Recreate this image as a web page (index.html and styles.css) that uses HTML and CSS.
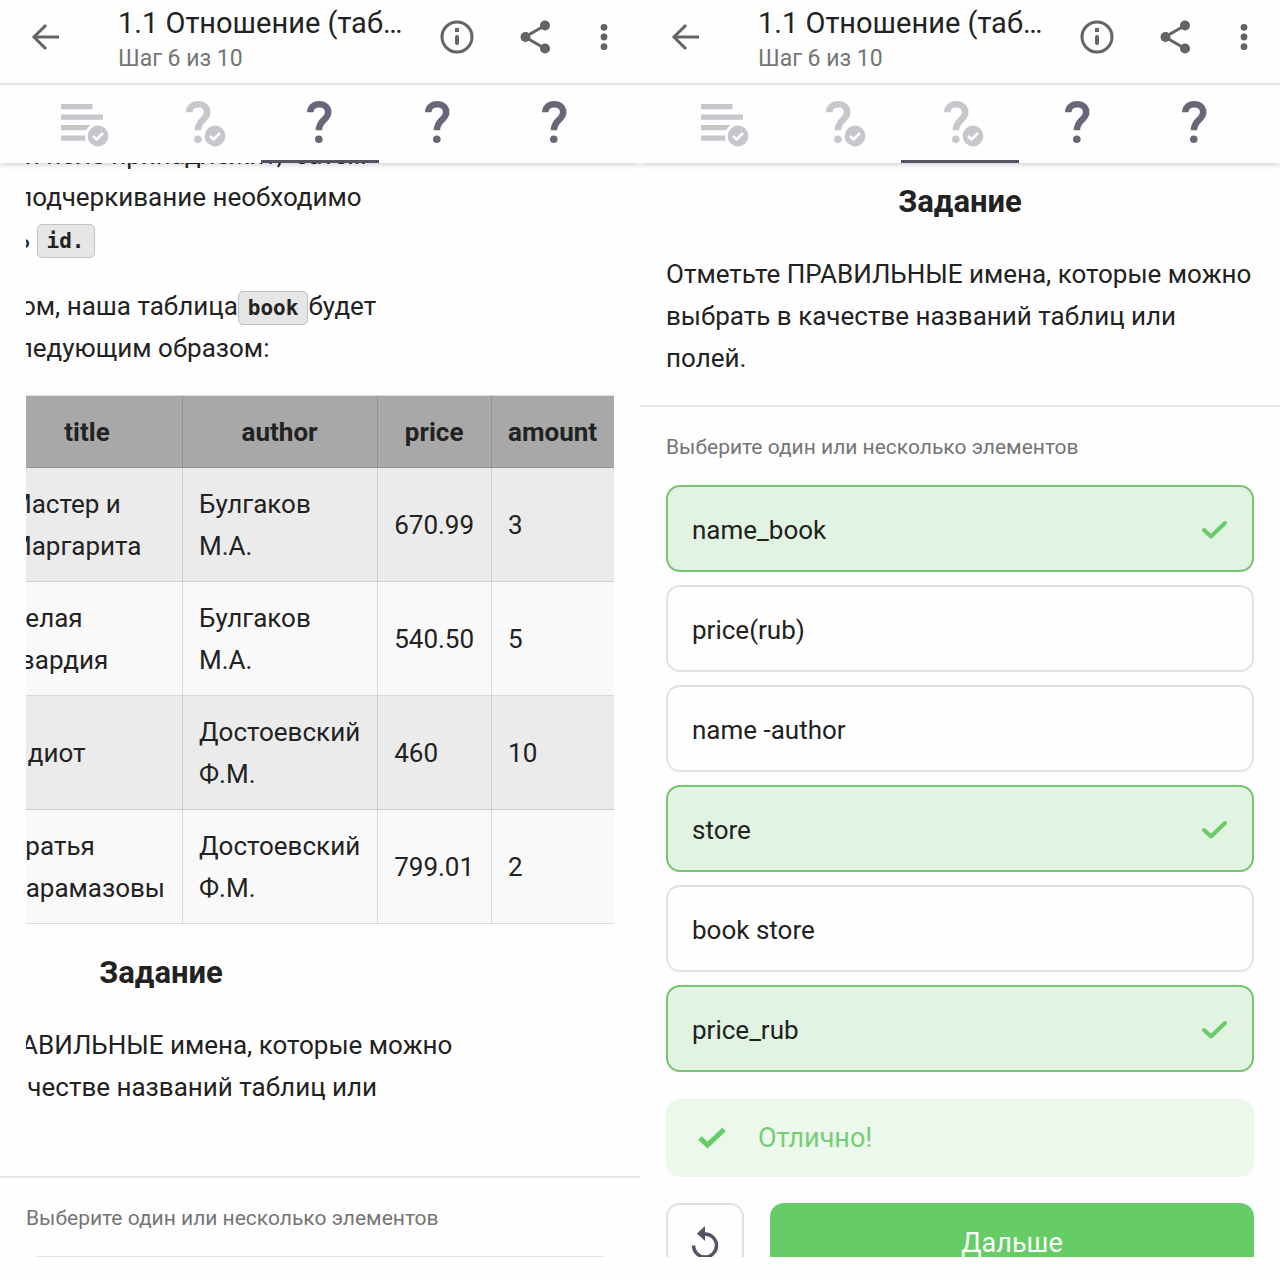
FILE: index.html
```
<!DOCTYPE html>
<html lang="ru">
<head>
<meta charset="utf-8">
<meta name="viewport" content="width=device-width, initial-scale=1">
<title>1.1 Отношение (таблица)</title>
<link rel="stylesheet" href="styles.css">
</head>
<body>
<svg class="sprite" aria-hidden="true">
  <symbol id="back" viewBox="0 0 40 40"><path d="M33 20H8M20 8 8 20l12 12" fill="none" stroke="currentColor" stroke-width="3"/></symbol>
  <symbol id="info" viewBox="0 0 40 40"><circle cx="20" cy="20" r="15" fill="none" stroke="currentColor" stroke-width="3"/><path d="M20 20v6" stroke="currentColor" stroke-width="4" stroke-linecap="round"/><rect x="18" y="11" width="4" height="4" fill="currentColor"/></symbol>
  <symbol id="share" viewBox="0 0 40 40"><path d="M30 8.500 10 20l20 11.500" fill="none" stroke="currentColor" stroke-width="3"/><g fill="currentColor"><circle cx="30" cy="8.500" r="5"/><circle cx="10.500" cy="20" r="5"/><circle cx="30" cy="31.500" r="5"/></g></symbol>
  <symbol id="more" viewBox="0 0 22 40"><g fill="currentColor"><circle cx="11" cy="10.300" r="3.400"/><circle cx="11" cy="20" r="3.400"/><circle cx="11" cy="29.700" r="3.400"/></g></symbol>
  <symbol id="badge" viewBox="0 0 48 48"><circle cx="37" cy="36" r="13" fill="#fff"/><circle cx="37" cy="36" r="10.400" fill="currentColor"/><path d="m32 36 3.500 3.500L42 33" fill="none" stroke="#fff" stroke-width="2.600"/></symbol>
  <symbol id="text" viewBox="0 0 48 48"><path d="M0 4h31.500v5.300H0zM0 14.500h42v5.300H0zM0 25h42v5.300H0zM0 35.500h42v5.300H0z" fill="currentColor"/><use href="#badge"/></symbol>
  <symbol id="mark" viewBox="0 0 25 43"><path d="M3.300 11.200C3.300 6.300 7 3.300 12.200 3.300 17.600 3.300 21.200 6.400 21.200 11.300 21.200 19 11.900 18.500 11.900 29.200" fill="none" stroke="currentColor" stroke-width="6.500"/><circle cx="11.800" cy="38.300" r="3.800" fill="currentColor"/></symbol>
  <symbol id="quiz" viewBox="0 0 48 48"><use href="#mark" x="11" y="1" width="25" height="43"/></symbol>
  <symbol id="quiz-done" viewBox="0 0 48 48"><use href="#mark" x="8" y="1" width="25" height="43"/><use href="#badge"/></symbol>
  <symbol id="tick" viewBox="0 0 28 28"><path d="m4 14 7 6.500L25 7" fill="none" stroke="currentColor" stroke-width="4" stroke-linecap="round" stroke-linejoin="round"/></symbol>
  <symbol id="tick-bold" viewBox="0 0 28 28"><path d="m2 14 7.500 7L26 5.500" fill="none" stroke="currentColor" stroke-width="5"/></symbol>
  <symbol id="retry" viewBox="0 0 32 36"><path d="M4.500 20.500A11.500 11.500 0 1 0 16 9" fill="none" stroke="currentColor" stroke-width="3.400"/><path d="M16 1v15l-8-7.500z" fill="currentColor"/></symbol>
</svg>
<main class="panes">
  <section class="pane">
    <header class="bar">
      <button class="icon" aria-label="Назад"><svg width="40" height="40"><use href="#back"/></svg></button>
      <div class="heading"><h1>1.1 Отношение (таб…</h1><p>Шаг 6 из 10</p></div>
      <button class="icon" aria-label="Информация"><svg width="40" height="40"><use href="#info"/></svg></button>
      <button class="icon" aria-label="Поделиться"><svg width="40" height="40"><use href="#share"/></svg></button>
      <button class="icon" aria-label="Меню"><svg width="22" height="40"><use href="#more"/></svg></button>
    </header>
    <nav class="tabs" aria-label="Шаги">
      <a class="done" href="#s4" aria-label="Шаг 4"><svg width="48" height="48"><use href="#text"/></svg></a>
      <a class="done" href="#s5" aria-label="Шаг 5"><svg width="48" height="48"><use href="#quiz-done"/></svg></a>
      <a class="current" href="#s6" aria-label="Шаг 6"><svg width="48" height="48"><use href="#quiz"/></svg></a>
      <a href="#s7" aria-label="Шаг 7"><svg width="48" height="48"><use href="#quiz"/></svg></a>
      <a href="#s8" aria-label="Шаг 8"><svg width="48" height="48"><use href="#quiz"/></svg></a>
    </nav>
    <div class="content">
      <div class="lesson">
        <div class="scrolled">
          <p>какой схеме и поле принадлежит,&nbsp; затем<br>сразу через подчеркивание необходимо<br>расположить <code>id.</code></p>
          <p>Таким образом, наша таблица<code>book</code>будет<br>выглядеть следующим образом:</p>
          <table>
            <thead><tr><th>book_id</th><th>title</th><th>author</th><th>price</th><th>amount</th></tr></thead>
            <tbody>
              <tr><td>1</td><td>Мастер и Маргарита</td><td>Булгаков М.А.</td><td>670.99</td><td>3</td></tr>
              <tr><td>2</td><td>Белая гвардия</td><td>Булгаков М.А.</td><td>540.50</td><td>5</td></tr>
              <tr><td>3</td><td>Идиот</td><td>Достоевский Ф.М.</td><td>460</td><td>10</td></tr>
              <tr><td>4</td><td>Братья Карамазовы</td><td>Достоевский Ф.М.</td><td>799.01</td><td>2</td></tr>
            </tbody>
          </table>
          <h2>Задание</h2>
          <p>Отметьте ПРАВИЛЬНЫЕ имена, которые можно выбрать в качестве названий таблиц или полей.</p>
        </div>
      </div>
      <form class="quiz">
        <p class="hint">Выберите один или несколько элементов</p>
        <label class="option"><input type="checkbox"><span>name_book</span></label>
      </form>
    </div>
  </section>

  <section class="pane">
    <header class="bar">
      <button class="icon" aria-label="Назад"><svg width="40" height="40"><use href="#back"/></svg></button>
      <div class="heading"><h1>1.1 Отношение (таб…</h1><p>Шаг 6 из 10</p></div>
      <button class="icon" aria-label="Информация"><svg width="40" height="40"><use href="#info"/></svg></button>
      <button class="icon" aria-label="Поделиться"><svg width="40" height="40"><use href="#share"/></svg></button>
      <button class="icon" aria-label="Меню"><svg width="22" height="40"><use href="#more"/></svg></button>
    </header>
    <nav class="tabs" aria-label="Шаги">
      <a class="done" href="#s4" aria-label="Шаг 4"><svg width="48" height="48"><use href="#text"/></svg></a>
      <a class="done" href="#s5" aria-label="Шаг 5"><svg width="48" height="48"><use href="#quiz-done"/></svg></a>
      <a class="done current" href="#s6" aria-label="Шаг 6"><svg width="48" height="48"><use href="#quiz-done"/></svg></a>
      <a href="#s7" aria-label="Шаг 7"><svg width="48" height="48"><use href="#quiz"/></svg></a>
      <a href="#s8" aria-label="Шаг 8"><svg width="48" height="48"><use href="#quiz"/></svg></a>
    </nav>
    <div class="content">
      <div class="lesson task">
        <h2>Задание</h2>
        <p>Отметьте ПРАВИЛЬНЫЕ имена, которые можно выбрать в качестве названий таблиц или полей.</p>
      </div>
      <form class="quiz">
        <p class="hint">Выберите один или несколько элементов</p>
        <label class="option"><input type="checkbox" checked><span>name_book</span><svg width="28" height="28"><use href="#tick"/></svg></label>
        <label class="option"><input type="checkbox"><span>price(rub)</span></label>
        <label class="option"><input type="checkbox"><span>name -author</span></label>
        <label class="option"><input type="checkbox" checked><span>store</span><svg width="28" height="28"><use href="#tick"/></svg></label>
        <label class="option"><input type="checkbox"><span>book store</span></label>
        <label class="option"><input type="checkbox" checked><span>price_rub</span><svg width="28" height="28"><use href="#tick"/></svg></label>
        <p class="result"><svg width="28" height="28"><use href="#tick-bold"/></svg>Отлично!</p>
        <div class="actions">
          <button class="retry" type="reset" aria-label="Решить снова"><svg width="32" height="36"><use href="#retry"/></svg></button>
          <button class="next" type="button">Дальше</button>
        </div>
      </form>
    </div>
  </section>
</main>
</body>
</html>
```
FILE: styles.css
```
* { box-sizing: border-box; }
body, h1, h2, p { margin: 0; }
body { background: #fefefe; color: #222; font: 26px/42px Roboto, "Noto Sans", sans-serif; }
.sprite { display: none; }
svg { display: block; flex: none; }
button { font: inherit; cursor: pointer; }

.panes { display: grid; grid-template-columns: 1fr 1fr; height: 100vh; padding-bottom: 23px; }
.pane { display: flex; flex-direction: column; min-width: 0; min-height: 0; }

.bar { display: flex; align-items: center; height: 85px; padding: 0 25px 10px 26px; border-bottom: 2px solid #e4e4e4; flex: none; gap: 38px; color: #646464; }
.icon { padding: 0; border: 0; background: none; color: inherit; }
.heading { flex: 1; min-width: 0; margin-left: 14px; margin-right: -20px; padding-top: 6px; }
.heading h1 { font-size: 29px; font-weight: 400; line-height: 38px; color: #222; white-space: nowrap; }
.heading p { font-size: 23px; line-height: 34px; color: #757575; }

.tabs { display: flex; height: 78px; padding: 0 26px; flex: none; position: relative; z-index: 1; box-shadow: 0 1px 6px rgba(0, 0, 0, .22); clip-path: inset(0 0 -12px 0); background: #fefefe; color: #69667a; }
.tabs a { flex: 1; display: flex; align-items: center; justify-content: center; color: inherit; padding-top: 3px; border-bottom: 3px solid transparent; }
.tabs .done { color: #c6c6cc; }
.tabs .current { border-bottom-color: #535366; }

.content { flex: 1; min-height: 0; overflow: hidden; }
.lesson { margin: 0 26px; overflow: hidden; padding-bottom: 26px; }
.task { padding-top: 14px; }
h2 { margin-bottom: 26px; font-size: 31px; line-height: 50px; font-weight: 700; text-align: center; }
/* lesson text scrolled down and sideways inside its frame */
.scrolled { margin-top: -29px; margin-left: -159px; width: 100%; }
.scrolled p + p { margin-top: 25px; }
.scrolled h2 { margin-top: 24px; }

code { display: inline-block; vertical-align: middle; height: 34px; padding: 0 9px; border: 1px solid #c2c2c2; border-radius: 5px; background: #e6e6e6; font: 700 21px/32px "DejaVu Sans Mono", monospace; }

table { margin-top: 26px; width: 100%; border-collapse: collapse; }
th, td { height: 114px; padding: 0 17px 0 16px; border: 1px solid rgba(0, 0, 0, .12); text-align: left; }
th { height: 72px; text-align: center; background: #a8a8a8; }
td { background: #f9f9f9; }
tr:nth-child(odd) td { background: #ebebeb; }

.quiz { padding: 28px 26px 0; border-top: 2px solid #e6e6e6; display: flex; flex-direction: column; }
.hint { margin-bottom: 26px; font-size: 21px; line-height: 24px; color: #757575; }
.option { display: flex; align-items: center; justify-content: space-between; height: 87px; padding: 2px 24px 0; margin-bottom: 13px; border: 2px solid #e2e2e2; border-radius: 14px; position: relative; cursor: pointer; }
.option input { position: absolute; inset: 0; margin: 0; opacity: 0; }
.option svg { color: #66cc66; }
.option:has(:checked) { border-color: #74c474; background: #e1f4e1; }
.result { display: flex; align-items: center; gap: 32px; height: 78px; margin: 14px 0 26px; padding: 0 32px; border-radius: 14px; background: #ecf8ec; color: #76cd76; font-size: 27px; }
.result svg { color: #66cc66; }
.actions { display: flex; gap: 26px; }
.actions button { height: 80px; border-radius: 14px; }
.retry { display: flex; justify-content: center; align-items: center; width: 78px; padding: 0; border: 2px solid #e0e0e4; background: none; color: #535366; }
.next { flex: 1; border: 0; background: #66cc66; color: #fff; font-size: 27px; }
```
